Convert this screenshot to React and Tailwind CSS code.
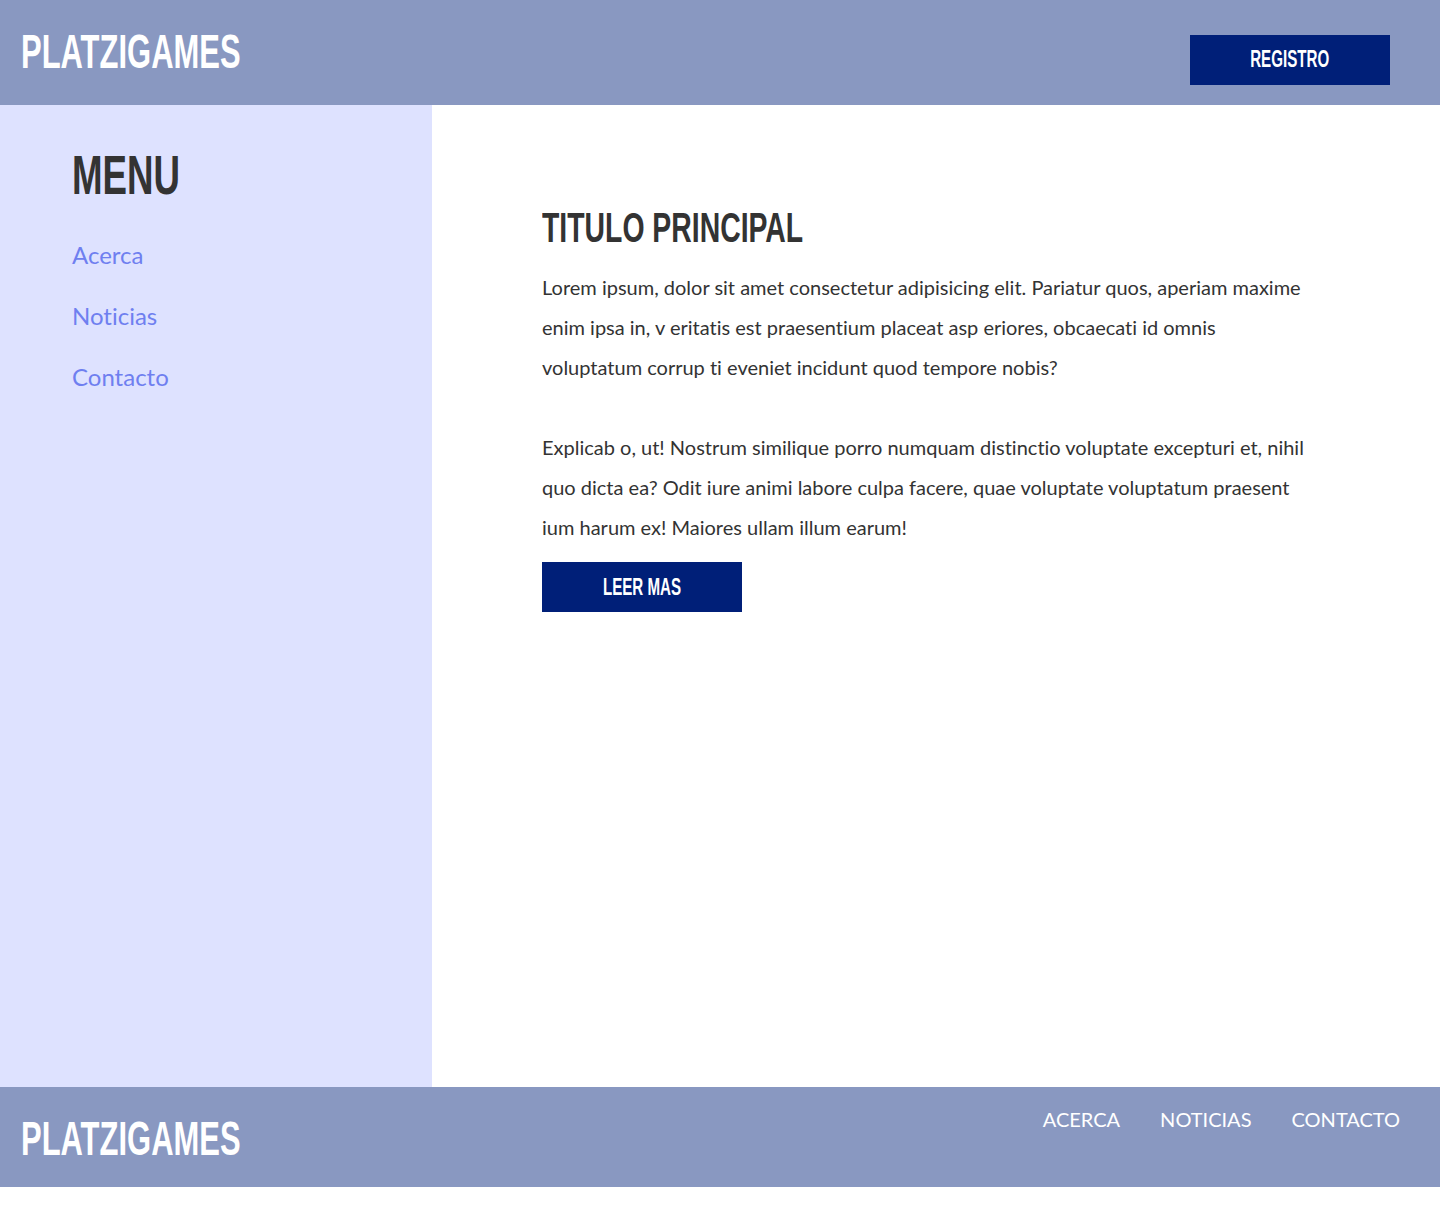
const display = { fontFamily: '"Liberation Sans", Arial, sans-serif' };
const body = { fontFamily: 'Lato, "Open Sans", sans-serif' };

function Logo() {
  return (
    <span
      style={display}
      className="inline-block origin-left scale-x-[0.645] text-[48px] font-bold leading-none text-white"
    >
      PLATZIGAMES
    </span>
  );
}

export default function App() {
  const links = ["Acerca", "Noticias", "Contacto"];

  return (
    <div
      className="w-[1440px] min-h-[1227px] bg-white text-[#333] [font-variant-ligatures:none]"
      style={body}
    >
      {/* Header */}
      <header className="flex h-[105px] items-start justify-between bg-[#8998c1] pl-[21px] pr-[50px]">
        <div className="pt-[28px]">
          <Logo />
        </div>
        <button className="mt-[35px] flex h-[50px] w-[200px] items-center justify-center bg-[#001f78]">
          <span
            style={display}
            className="-mt-[3px] inline-block scale-x-[0.63] text-[24px] font-bold leading-none text-white"
          >
            REGISTRO
          </span>
        </button>
      </header>

      {/* Body */}
      <div className="flex h-[982px]">
        <aside className="w-[432px] shrink-0 bg-[#dee2ff] pl-[72px] pt-[36px]">
          <h2
            style={display}
            className="origin-left scale-x-[0.655] text-[56px] font-bold leading-[1.2] text-[#333]"
          >
            MENU
          </h2>
          <ul className="mt-[30px] space-y-[27px]">
            {links.map((l) => (
              <li key={l}>
                <a href="#" className="text-[24px] leading-[34px] text-[#6f7ff0]">
                  {l}
                </a>
              </li>
            ))}
          </ul>
        </aside>

        <main className="flex-1 pl-[110px] pr-[130px] pt-[97px]">
          <h1
            style={display}
            className="origin-left scale-x-[0.66] text-[43px] font-bold leading-[1.2] text-[#333]"
          >
            TITULO PRINCIPAL
          </h1>
          <div className="mt-[13px] text-[20px] leading-[40px] text-[#333]">
            <p>
              Lorem ipsum, dolor sit amet consectetur adipisicing elit. Pariatur quos, aperiam maxime
              enim ipsa in, v eritatis est praesentium placeat asp eriores, obcaecati id omnis
              voluptatum corrup ti eveniet incidunt quod tempore nobis?
            </p>
            <p className="mt-[40px]">
              Explicab o, ut! Nostrum similique porro numquam distinctio voluptate excepturi et, nihil
              quo dicta ea? Odit iure animi labore culpa facere, quae voluptate voluptatum praesent
              ium harum ex! Maiores ullam illum earum!
            </p>
          </div>
          <button className="mt-[15px] flex h-[50px] w-[200px] items-center justify-center bg-[#001f78]">
            <span
              style={display}
              className="inline-block scale-x-[0.63] text-[24px] font-bold leading-none text-white"
            >
              LEER MAS
            </span>
          </button>
        </main>
      </div>

      {/* Footer */}
      <footer className="flex h-[100px] items-start justify-between bg-[#8998c1] pl-[21px] pr-[40px]">
        <div className="pt-[28px]">
          <Logo />
        </div>
        <nav className="flex gap-[40px] pt-[18px] text-[20px] leading-[28px] text-white">
          <a href="#">ACERCA</a>
          <a href="#">NOTICIAS</a>
          <a href="#">CONTACTO</a>
        </nav>
      </footer>
    </div>
  );
}
